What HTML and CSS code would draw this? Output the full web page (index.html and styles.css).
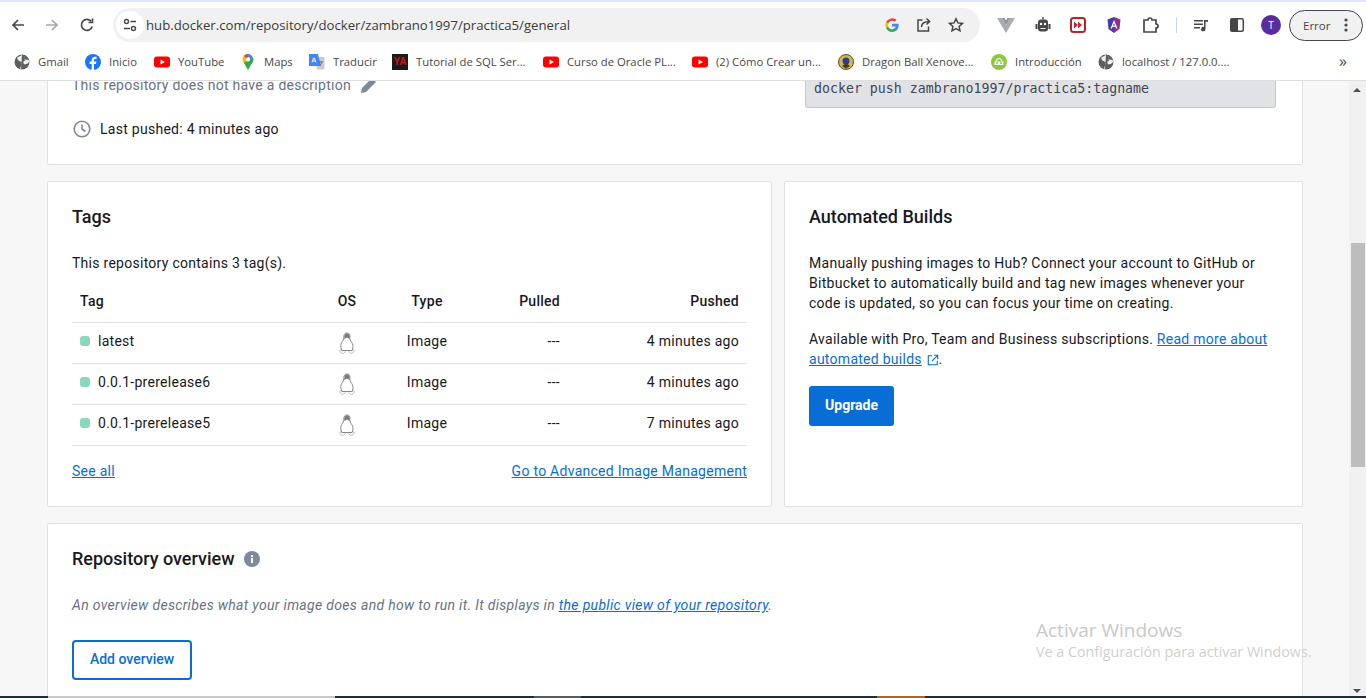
FILE: index.html
```html
<!DOCTYPE html>
<html lang="en">
<head>
    <meta charset="UTF-8">
    <title>practica5 | Docker Hub</title>
    <link rel="stylesheet" href="styles.css">
</head>
<body>
    <div class="tabstrip"></div>
    <header class="toolbar">
        <div class="nav-btns">
            <svg class="ic" viewBox="0 0 16 16"><path d="M14 8H3M8 3L3 8l5 5" fill="none" stroke="#474747" stroke-width="1.7"/></svg>
            <svg class="ic" viewBox="0 0 16 16"><path d="M2 8h11M8 3l5 5-5 5" fill="none" stroke="#a8a8a8" stroke-width="1.7"/></svg>
            <svg class="ic ic-reload" viewBox="0 0 16 16"><path d="M13.2 9.5A5.5 5.5 0 1 1 12 4.2M13.5 1.5v4h-4" fill="none" stroke="#474747" stroke-width="1.7"/></svg>
        </div>
        <div class="omnibox">
            <span class="site-btn">
                <svg width="16" height="16" viewBox="0 0 16 16"><g fill="none" stroke="#474747" stroke-width="1.4"><circle cx="4.5" cy="4.5" r="2"/><path d="M8.5 4.5H14M2 11.5h6"/><circle cx="11.5" cy="11.5" r="2"/></g></svg>
            </span>
            <span class="url">hub.docker.com/repository/docker/zambrano1997/practica5/general</span>
            <svg class="ic-g" viewBox="0 0 16 16"><path d="M14.6 8.2c0-.5 0-1-.1-1.4H8v2.7h3.7a3.2 3.2 0 0 1-1.4 2.1v1.7h2.3c1.3-1.2 2-3 2-5.1z" fill="#4285f4"/><path d="M8 15c1.9 0 3.4-.6 4.6-1.700l-2.300-1.700c-.6.4-1.400.7-2.300.7-1.800 0-3.300-1.200-3.800-2.900H2.200v1.800A7 7 0 0 0 8 15z" fill="#34a853"/><path d="M4.200 9.400a4.200 4.200 0 0 1 0-2.800V4.800H2.200a7 7 0 0 0 0 6.400z" fill="#fbbc05"/><path d="M8 3.800c1 0 1.900.4 2.600 1l2-2A7 7 0 0 0 2.200 4.800l2 1.800C4.700 5 6.200 3.800 8 3.800z" fill="#ea4335"/></svg>
            <svg class="ic-share" viewBox="0 0 16 16"><path d="M6.500 3H2v11h10.500V9.500M5.500 10c0-3.500 2.500-5.500 8-5.500M10.500 1.500l3.200 3-3.200 3" fill="none" stroke="#474747" stroke-width="1.5"/></svg>
            <svg class="ic-star" viewBox="0 0 16 16"><path d="M8 1.800l1.900 4.100 4.500.5-3.300 3 .9 4.500L8 11.600l-4 2.300.9-4.500-3.300-3 4.500-.5z" fill="none" stroke="#474747" stroke-width="1.500"/></svg>
        </div>
        <div class="ext-icons">
            <svg class="ext ext-vue" viewBox="0 0 18 16"><path d="M0 1h5l4 7 4-7h5L9 16z" fill="#a9acaf"/><path d="M5 1h2.500L9 3.800 10.500 1H13L9 8z" fill="#8e9194"/></svg>
            <svg class="ext ext-bot" viewBox="0 0 16 16"><path d="M7.300 0h1.400v2.500H7.300z" fill="#474747"/><rect x="3" y="2.500" width="10" height="12" rx="3" fill="#474747"/><rect x="0.500" y="7" width="2" height="5" fill="#474747"/><rect x="13.500" y="7" width="2" height="5" fill="#474747"/><circle cx="6" cy="7" r="1.200" fill="#fff"/><circle cx="10" cy="7" r="1.200" fill="#fff"/><path d="M5.500 11h5v1h-5z" fill="#fff"/></svg>
            <svg class="ext ext-red" viewBox="0 0 16 16"><rect x="1" y="1" width="14" height="14" rx="2.500" fill="#fff" stroke="#b3262b" stroke-width="2"/><path d="M4 4.500L8 8l-4 3.500zM8 4.500L12 8l-4 3.500z" fill="#c2272d"/></svg>
            <svg class="ext ext-ang" viewBox="0 0 16 16"><path d="M8 0l6.500 2.500-1 9.500L8 16z" fill="#8f2f8a"/><path d="M8 0L1.500 2.500l1 9.500L8 16z" fill="#3f3fa8"/><path d="M8 3L4.500 11.500h1.400l.7-1.800h2.800l.7 1.800h1.400zM7 8.500L8 6l1 2.500z" fill="#fff"/></svg>
            <svg class="ext ext-puzzle" viewBox="0 0 18 18"><path d="M3 4h4a2 2 0 0 1 4 0h4v4a2 2 0 0 1 0 4v4H3z" fill="none" stroke="#474747" stroke-width="1.700"/></svg>
            <span class="sep"></span>
            <svg class="ext ext-music" viewBox="0 0 16 16"><path d="M1 3h9v1.500H1zM1 6.500h9V8H1zM1 10h6v1.500H1z" fill="#474747"/><path d="M11 3h4v1.800h-2.500v7.200a2.200 2.200 0 1 1-1.500-2z" fill="#474747"/></svg>
            <svg class="ext ext-panel" viewBox="0 0 16 16"><rect x="1.700" y="1.700" width="12.600" height="12.600" rx="1.500" fill="#fff" stroke="#474747" stroke-width="1.500"/><rect x="1.700" y="1.700" width="7.300" height="12.600" fill="#474747"/></svg>
            <span class="avatar">T</span>
            <span class="err-pill">Error
                <svg width="4" height="16" viewBox="0 0 4 16"><circle cx="2" cy="3" r="1.600" fill="#474747"/><circle cx="2" cy="8" r="1.600" fill="#474747"/><circle cx="2" cy="13" r="1.600" fill="#474747"/></svg>
            </span>
        </div>
    </header>

    <nav class="bookmarks">
        <a class="bm bm-gmail"><svg class="globe" viewBox="0 0 16 16"><circle cx="8" cy="8" r="7.500" fill="#5c5f62"/><path d="M8 .5c-1 2-3.500 1.500-4.500 3S5 7 6.500 7.500 8 10 7 12s-1 3 0 3.500M10 2c1 1 0 3 1.500 3.500s2.500 0 3.500 1c.500 2-1 3-2.500 3.500S10 11 9.500 9s.5-2 1.500-2" fill="#fff" stroke="none" opacity=".9"/></svg>Gmail</a>
        <a class="bm bm-inicio"><svg viewBox="0 0 16 16"><circle cx="8" cy="8" r="8" fill="#1877f2"/><path d="M9 16v-6h2l.4-2.400H9V6.200c0-.8.300-1.300 1.300-1.300h1.200V2.800c-.4-.1-1-.1-1.700-.1C8 2.700 6.700 4 6.700 6v1.600H4.600V10h2.100v6z" fill="#fff"/></svg>Inicio</a>
        <a class="bm bm-yt"><svg viewBox="0 0 16 16"><rect x="0" y="2.500" width="16" height="11" rx="3" fill="#f00"/><path d="M6.500 5.500L11 8l-4.500 2.500z" fill="#fff"/></svg>YouTube</a>
        <a class="bm bm-maps"><svg viewBox="0 0 16 16"><path d="M8 0a5.500 5.500 0 0 0-5.500 5.500c0 1.200.4 2.200 1 3L8 16z" fill="#fbbc04"/><path d="M8 0c-1.700 0-3.200.8-4.200 2l2.500 2.100A2.200 2.200 0 0 1 8 3.300z" fill="#ea4335"/><path d="M8 0v3.300a2.200 2.200 0 0 1 2.200 2.200l2.600-2.200A5.500 5.500 0 0 0 8 0z" fill="#4285f4"/><path d="M8 16l4.500-7.500c.6-.8 1-1.800 1-3 0-.8-.2-1.500-.5-2.200L4 8.800z" fill="#34a853"/><circle cx="8" cy="5.500" r="2.100" fill="#fff"/></svg>Maps</a>
        <a class="bm bm-tr"><svg viewBox="0 0 16 16"><path d="M6 3h9.500v12.500H8z" fill="#c9cbce"/><path d="M0 0h9l3 12H0z" fill="#4285f4"/><path d="M3 8.500l1.500-4.500h.8L7 8.500M3.700 7h2.700" fill="none" stroke="#fff" stroke-width=".9"/><path d="M10 8h4M12 7v1M13 8c-.5 2-1.500 3-2.500 3.500" fill="none" stroke="#666" stroke-width=".8"/></svg>Traducir</a>
        <a class="bm bm-ya"><span class="ya-logo">YA</span>Tutorial de SQL Ser...</a>
        <a class="bm bm-oracle"><svg viewBox="0 0 16 16"><rect x="0" y="2.500" width="16" height="11" rx="3" fill="#f00"/><path d="M6.500 5.500L11 8l-4.500 2.500z" fill="#fff"/></svg>Curso de Oracle PL...</a>
        <a class="bm bm-crear"><svg viewBox="0 0 16 16"><rect x="0" y="2.500" width="16" height="11" rx="3" fill="#f00"/><path d="M6.500 5.500L11 8l-4.500 2.500z" fill="#fff"/></svg>(2) Cómo Crear un...</a>
        <a class="bm bm-db"><svg viewBox="0 0 16 16"><circle cx="8" cy="8" r="7.500" fill="#d8b64c" stroke="#5b4a2a"/><circle cx="8" cy="7" r="3.500" fill="#24428f"/><path d="M4 12l4-3 4 3-4 2.500z" fill="#3b3b3b"/></svg>Dragon Ball Xenove...</a>
        <a class="bm bm-intro"><svg viewBox="0 0 16 16"><circle cx="8" cy="8" r="8" fill="#8ec63f"/><path d="M3.500 7.500h9V11h-9z" fill="#fff"/><circle cx="6" cy="9" r="1" fill="#8ec63f"/><circle cx="10" cy="9" r="1" fill="#8ec63f"/><path d="M5 7.500a3 3 0 0 1 6 0" fill="none" stroke="#fff"/></svg>Introducción</a>
        <a class="bm bm-local"><svg class="globe" viewBox="0 0 16 16"><circle cx="8" cy="8" r="7.500" fill="#5c5f62"/><path d="M8 .5c-1 2-3.500 1.500-4.500 3S5 7 6.500 7.500 8 10 7 12s-1 3 0 3.500M10 2c1 1 0 3 1.500 3.500s2.500 0 3.500 1c.500 2-1 3-2.500 3.500S10 11 9.500 9s.5-2 1.500-2" fill="#fff" opacity=".9"/></svg>localhost / 127.0.0....</a>
        <span class="bm-more">»</span>
    </nav>

    <div class="viewport">
        <main class="page">
            <section class="card card-info">
                <div class="info-left">
                    <p class="no-desc">This repository does not have a description
                        <svg width="18" height="18" viewBox="0 0 18 18"><path d="M1 17l1-5L12 2l4 4L6 16z" fill="#7f8898"/><path d="M13 1l1.500-.5 3 3L17 5z" fill="#7f8898"/></svg>
                    </p>
                    <p class="last-pushed">
                        <svg width="20" height="20" viewBox="0 0 20 20"><circle cx="10" cy="10" r="7.800" fill="none" stroke="#7f8898" stroke-width="1.600"/><path d="M10 5.500V10l3.500 2.500" fill="none" stroke="#7f8898" stroke-width="1.600"/></svg>
                        Last pushed: 4 minutes ago
                    </p>
                </div>
                <div class="cmd-box">docker push zambrano1997/practica5:tagname</div>
            </section>

            <div class="two-col">
                <section class="card card-tags">
                    <h3>Tags</h3>
                    <p class="tag-count">This repository contains 3 tag(s).</p>
                    <table class="tag-table">
                        <thead>
                            <tr><th class="c-tag">Tag</th><th class="c-os">OS</th><th class="c-type">Type</th><th class="c-pulled">Pulled</th><th class="c-pushed">Pushed</th></tr>
                        </thead>
                        <tbody>
                            <tr>
                                <td class="c-tag"><span class="dot"></span>latest</td>
                                <td class="c-os"><svg class="tux" viewBox="0 0 18 22"><use href="#tux"/></svg></td>
                                <td class="c-type">Image</td><td class="c-pulled">---</td><td class="c-pushed">4 minutes ago</td>
                            </tr>
                            <tr>
                                <td class="c-tag"><span class="dot"></span>0.0.1-prerelease6</td>
                                <td class="c-os"><svg class="tux" viewBox="0 0 18 22"><use href="#tux"/></svg></td>
                                <td class="c-type">Image</td><td class="c-pulled">---</td><td class="c-pushed">4 minutes ago</td>
                            </tr>
                            <tr>
                                <td class="c-tag"><span class="dot"></span>0.0.1-prerelease5</td>
                                <td class="c-os"><svg class="tux" viewBox="0 0 18 22"><use href="#tux"/></svg></td>
                                <td class="c-type">Image</td><td class="c-pulled">---</td><td class="c-pushed">7 minutes ago</td>
                            </tr>
                        </tbody>
                    </table>
                    <div class="tag-links">
                        <a class="link">See all</a>
                        <a class="link">Go to Advanced Image Management</a>
                    </div>
                </section>

                <section class="card card-builds">
                    <h3>Automated Builds</h3>
                    <p class="build-text">Manually pushing images to Hub? Connect your account to GitHub or Bitbucket to automatically build and tag new images whenever your code is updated, so you can focus your time on creating.</p>
                    <p class="build-text">Available with Pro, Team and Business subscriptions. <a class="link">Read more about automated builds</a>
                        <svg class="ext-link" width="12" height="12" viewBox="0 0 14 14"><path d="M6 2H1.500v10.500H12V8M8 1.500h4.500V6M12.500 1.500L6 8" fill="none" stroke="#086dd7" stroke-width="1.300"/></svg>.</p>
                    <button class="btn-upgrade">Upgrade</button>
                </section>
            </div>

            <section class="card card-overview">
                <h3>Repository overview
                    <svg class="info-ic" width="16" height="16" viewBox="0 0 16 16"><circle cx="8" cy="8" r="8" fill="#8089a0"/><path d="M7 7h2v5H7zM7 4h2v2H7z" fill="#fff"/></svg>
                </h3>
                <p class="overview-note">An overview describes what your image does and how to run it. It displays in <a class="link">the public view of your repository</a>.</p>
                <button class="btn-overview">Add overview</button>
            </section>
        </main>

        <div class="scrollbar">
            <span class="arrow-up"></span>
            <div class="thumb"></div>
            <span class="arrow-down"></span>
        </div>
    </div>

    <div class="watermark">
        <div class="wm-title">Activar Windows</div>
        <div class="wm-sub">Ve a Configuración para activar Windows.</div>
    </div>

    <div class="taskbar">
        <span class="tb-light"></span>
        <span class="tb-grey"></span>
        <span class="tb-orange"></span>
    </div>

    <svg class="defs" width="0" height="0">
        <symbol id="tux" viewBox="0 0 18 22">
            <path d="M1.500 18.500l3-2 3 3-2 2c-2 0-3.500-.8-4-3zM16.500 18.500l-3-2-3 3 2 2c2 0 3.500-.8 4-3z" fill="#f6f6f6" stroke="#c4c6c8"/>
            <path d="M9 1C6.300 1 5.800 3 5.800 5.500c0 2-.8 3-2 4.800S2.300 14.500 3.800 18.500h10.400c1.500-4 .600-6.400-.6-8.200s-1.800-2.800-1.800-4.800C12.200 3 11.700 1 9 1z" fill="#fff" stroke="#77797c" stroke-width=".9"/>
            <path d="M6.400 7C5.900 3.500 6.800 1.500 9 1.500S12.100 3.500 11.600 7L9 5.500z" fill="#77797c"/>
        </symbol>
    </svg>
</body>
</html>
```

FILE: styles.css
```css
html, body {
    margin: 0;
    padding: 0;
    height: 100%;
    overflow: hidden;
}
body {
    font-family: Roboto, Arial, sans-serif;
    font-size: 14px;
    color: #17191e;
    background-color: #fff;
    display: flex;
    flex-direction: column;
}
p, h3 {
    margin: 0;
}
.defs {
    position: absolute;
}
.tabstrip {
    height: 2px;
    background-color: #d9e6fb;
}

/* browser toolbar */
.toolbar {
    height: 40px;
    display: flex;
    align-items: flex-start;
    padding-top: 6px;
    box-sizing: border-box;
    background-color: #fff;
}
.nav-btns {
    display: flex;
    align-items: center;
    gap: 18px;
    width: 113px;
    height: 34px;
    padding-left: 10px;
    box-sizing: border-box;
}
.ic {
    width: 16px;
    height: 16px;
}
.ic-reload {
    margin-left: 1px;
}
.omnibox {
    width: 867px;
    height: 34px;
    border-radius: 17px;
    background-color: #f1f1f1;
    display: flex;
    align-items: center;
    padding-left: 3px;
    box-sizing: border-box;
}
.site-btn {
    width: 28px;
    height: 28px;
    border-radius: 50%;
    background-color: #fff;
    display: flex;
    align-items: center;
    justify-content: center;
}
.url {
    font-family: "Open Sans", sans-serif;
    font-size: 13.2px;
    color: #3c3c3c;
    margin-left: 2px;
    width: 738px;
}
.ic-g, .ic-share, .ic-star {
    width: 16px;
    height: 16px;
}
.ic-share {
    margin-left: 16px;
}
.ic-star {
    margin-left: 16px;
}
.ext-icons {
    flex: 1;
    display: flex;
    align-items: center;
    height: 34px;
    position: relative;
}
.ext {
    width: 16px;
    height: 16px;
}
.ext-vue {
    width: 18px;
    margin-left: 17px;
}
.ext-bot {
    margin-left: 20px;
}
.ext-red {
    margin-left: 19px;
}
.ext-ang {
    margin-left: 20px;
}
.ext-puzzle {
    width: 18px;
    height: 18px;
    margin-left: 19px;
}
.sep {
    width: 1px;
    height: 16px;
    background-color: #c7d7f0;
    margin-left: 17px;
}
.ext-music {
    margin-left: 16px;
}
.ext-panel {
    margin-left: 20px;
}
.avatar {
    width: 20px;
    height: 20px;
    border-radius: 50%;
    background-color: #5a2ca0;
    color: #fff;
    font-family: "Open Sans", sans-serif;
    font-size: 10px;
    display: flex;
    align-items: center;
    justify-content: center;
    margin-left: 16px;
}
.err-pill {
    width: 74px;
    height: 31px;
    margin-left: 8px;
    border: 1px solid #474747;
    border-radius: 16px;
    background-color: #f1f1f1;
    box-sizing: border-box;
    display: flex;
    align-items: center;
    justify-content: space-between;
    padding: 0 14px 0 13px;
    font-family: "Open Sans", sans-serif;
    font-size: 11.5px;
    color: #474747;
}

/* bookmarks bar */
.bookmarks {
    height: 39px;
    box-sizing: border-box;
    padding-top: 1px;
    border-bottom: 1px solid #dedede;
    background-color: #fff;
    display: flex;
    align-items: center;
    position: relative;
    padding-left: 14px;
    font-family: "Open Sans", sans-serif;
    font-size: 11.3px;
    color: #474747;
}
.bm {
    display: flex;
    align-items: center;
    gap: 8px;
    white-space: nowrap;
}
.bm svg, .ya-logo {
    width: 16px;
    height: 16px;
    flex-shrink: 0;
}
.bm-gmail { width: 71px; }
.bm-inicio { width: 69px; }
.bm-yt { width: 86px; }
.bm-maps { width: 69px; }
.bm-tr { width: 83px; }
.bm-ya { width: 151px; }
.bm-oracle { width: 149px; }
.bm-crear { width: 146px; }
.bm-db { width: 153px; }
.bm-intro { width: 107px; }
.bm-local { width: 120px; }
.ya-logo {
    background-color: #1b1b1b;
    color: #d1121b;
    font-family: "Liberation Sans", sans-serif;
    font-weight: bold;
    font-size: 10px;
    line-height: 16px;
    text-align: center;
}
.bm-more {
    position: absolute;
    left: 1339px;
    top: 9px;
    font-size: 16px;
    line-height: 20px;
    color: #474747;
}

/* page */
.viewport {
    flex: 1;
    min-height: 0;
    display: flex;
    background-color: #f7f7f7;
    overflow: hidden;
}
.page {
    flex: 1;
    padding: 0 46px 0 47px;
    letter-spacing: 0.27px;
}
.card {
    background-color: #fff;
    border: 1px solid #e1e2e6;
    border-radius: 2px;
    box-sizing: border-box;
    padding: 24px;
}
.card-info {
    height: 105px;
    margin-top: -21px;
    border-top: 0;
    display: flex;
    justify-content: space-between;
    padding: 0 26px 0 24px;
}
.no-desc {
    color: #677285;
    line-height: 20px;
    padding-top: 15px;
    display: flex;
    align-items: center;
    gap: 9px;
}
.last-pushed {
    display: flex;
    align-items: center;
    gap: 8px;
    margin-top: 24px;
    line-height: 20px;
}
.cmd-box {
    width: 471px;
    height: 48px;
    box-sizing: border-box;
    padding: 20px 8px 0;
    background-color: #e1e2e6;
    border: 1px solid #c4c8d1;
    border-top: 0;
    border-radius: 0 0 3px 3px;
    font-family: "DejaVu Sans Mono", monospace;
    font-size: 13.25px;
    letter-spacing: 0;
    line-height: 18px;
    color: #3f4756;
}
.two-col {
    display: flex;
    gap: 12px;
    margin-top: 16px;
}
.card h3 {
    font-size: 18px;
    font-weight: 500;
    line-height: 24px;
    letter-spacing: 0;
}
.card-tags {
    width: 725px;
    height: 326px;
    padding-top: 23px;
}
.tag-count {
    margin-top: 24px;
    line-height: 20px;
}
.tag-table {
    width: 675px;
    border-collapse: collapse;
    table-layout: fixed;
    margin-top: 8px;
}
.tag-table th {
    font-weight: 500;
    height: 41px;
    padding: 0 8px 1px;
    box-sizing: border-box;
}
.tag-table td {
    height: 41px;
    padding: 0 8px 4px;
    box-sizing: border-box;
}
.tag-table tr {
    border-bottom: 1px solid #e1e2e6;
}
.c-tag {
    width: 248px;
    text-align: left;
}
.c-os {
    width: 54px;
    text-align: center;
}
.c-type {
    width: 106px;
    text-align: center;
}
.c-pulled {
    width: 88px;
    text-align: right;
}
.c-pushed {
    text-align: right;
}
.tag-table .c-os {
    padding: 0;
}
.dot {
    display: inline-block;
    width: 10px;
    height: 10px;
    border-radius: 3px;
    background-color: #8ad7bf;
    margin-right: 8px;
}
.tux {
    width: 18px;
    height: 22px;
    display: block;
    margin: 0 auto;
}
.tag-links {
    display: flex;
    justify-content: space-between;
    margin-top: 15px;
    line-height: 20px;
}
.link {
    color: #086dd7;
    text-decoration: underline;
}
.card-builds {
    width: 519px;
    height: 326px;
    padding-top: 23px;
}
.build-text {
    line-height: 20px;
    margin-top: 24px;
}
.build-text + .build-text {
    margin-top: 16px;
}
.ext-link {
    vertical-align: -2px;
    margin-left: 1px;
}
.btn-upgrade {
    display: block;
    width: 85px;
    height: 40px;
    margin-top: 17px;
    padding: 0 0 2px;
    border: 0;
    border-radius: 3px;
    background-color: #086dd7;
    color: #fff;
    font-family: Roboto, Arial, sans-serif;
    font-size: 14px;
    font-weight: 700;
}
.card-overview {
    margin-top: 16px;
    height: 300px;
    padding-top: 23px;
}
.card-overview h3 {
    display: flex;
    align-items: center;
    gap: 9px;
}
.overview-note {
    font-style: italic;
    letter-spacing: 0.32px;
    color: #677285;
    margin-top: 24px;
    line-height: 20px;
}
.btn-overview {
    display: block;
    width: 120px;
    height: 40px;
    margin-top: 25px;
    padding: 0 0 2px;
    border: 2px solid #086dd7;
    border-radius: 4px;
    background-color: #fff;
    color: #086dd7;
    font-family: Roboto, Arial, sans-serif;
    font-size: 14px;
    font-weight: 500;
}

/* scrollbar */
.scrollbar {
    width: 17px;
    flex-shrink: 0;
    background-color: #f1f1f1;
    position: relative;
}
.thumb {
    position: absolute;
    left: 2px;
    right: 1px;
    top: 162px;
    height: 224px;
    background-color: #bdbdbd;
}
.arrow-up, .arrow-down {
    position: absolute;
    left: 4px;
    width: 0;
    height: 0;
    border-left: 4px solid transparent;
    border-right: 4px solid transparent;
}
.arrow-up {
    top: 7px;
    border-bottom: 4px solid #505050;
}
.arrow-down {
    bottom: 5px;
    border-top: 4px solid #505050;
}

/* windows overlay bits */
.watermark {
    position: absolute;
    left: 1036px;
    top: 617px;
    font-family: "Open Sans", sans-serif;
    color: #c9c9c9;
    white-space: nowrap;
}
.wm-title {
    font-size: 19px;
    line-height: 26px;
}
.wm-sub {
    font-size: 14.3px;
    line-height: 18px;
    color: #cfcfcf;
}
.taskbar {
    position: absolute;
    left: 0;
    right: 0;
    top: 696px;
    height: 2px;
    display: flex;
    background-color: #1c2e3a;
}
.tb-light {
    width: 287px;
    margin-left: 48px;
    background-color: #c8c8c8;
}
.tb-grey {
    width: 47px;
    margin-left: 199px;
    background-color: #555d63;
}
.tb-orange {
    width: 48px;
    margin-left: 296px;
    background-color: #a8652e;
}
```
